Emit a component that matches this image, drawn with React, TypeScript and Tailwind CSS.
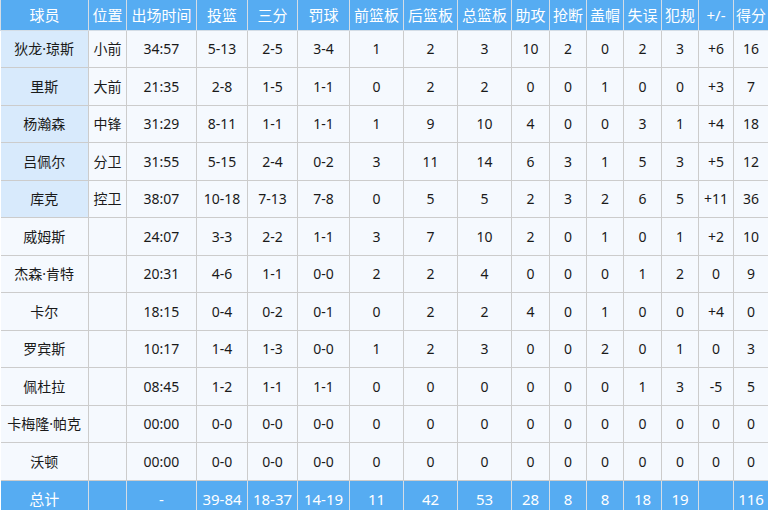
import React from "react";

type Row = {
  name: string;
  pos: string;
  starter: boolean;
  stats: string[];
};

const headers = [
  "球员", "位置", "出场时间", "投篮", "三分", "罚球", "前篮板", "后篮板",
  "总篮板", "助攻", "抢断", "盖帽", "失误", "犯规", "+/-", "得分",
];

const widths = [88, 38, 70, 51, 50, 52, 54, 54, 54, 38, 37, 37, 38, 37, 35, 35];

const rows: Row[] = [
  { name: "狄龙·琼斯", pos: "小前", starter: true, stats: ["34:57", "5-13", "2-5", "3-4", "1", "2", "3", "10", "2", "0", "2", "3", "+6", "16"] },
  { name: "里斯", pos: "大前", starter: true, stats: ["21:35", "2-8", "1-5", "1-1", "0", "2", "2", "0", "0", "1", "0", "0", "+3", "7"] },
  { name: "杨瀚森", pos: "中锋", starter: true, stats: ["31:29", "8-11", "1-1", "1-1", "1", "9", "10", "4", "0", "0", "3", "1", "+4", "18"] },
  { name: "吕佩尔", pos: "分卫", starter: true, stats: ["31:55", "5-15", "2-4", "0-2", "3", "11", "14", "6", "3", "1", "5", "3", "+5", "12"] },
  { name: "库克", pos: "控卫", starter: true, stats: ["38:07", "10-18", "7-13", "7-8", "0", "5", "5", "2", "3", "2", "6", "5", "+11", "36"] },
  { name: "威姆斯", pos: "", starter: false, stats: ["24:07", "3-3", "2-2", "1-1", "3", "7", "10", "2", "0", "1", "0", "1", "+2", "10"] },
  { name: "杰森·肯特", pos: "", starter: false, stats: ["20:31", "4-6", "1-1", "0-0", "2", "2", "4", "0", "0", "0", "1", "2", "0", "9"] },
  { name: "卡尔", pos: "", starter: false, stats: ["18:15", "0-4", "0-2", "0-1", "0", "2", "2", "4", "0", "1", "0", "0", "+4", "0"] },
  { name: "罗宾斯", pos: "", starter: false, stats: ["10:17", "1-4", "1-3", "0-0", "1", "2", "3", "0", "0", "2", "0", "1", "0", "3"] },
  { name: "佩杜拉", pos: "", starter: false, stats: ["08:45", "1-2", "1-1", "1-1", "0", "0", "0", "0", "0", "0", "1", "3", "-5", "5"] },
  { name: "卡梅隆·帕克", pos: "", starter: false, stats: ["00:00", "0-0", "0-0", "0-0", "0", "0", "0", "0", "0", "0", "0", "0", "0", "0"] },
  { name: "沃顿", pos: "", starter: false, stats: ["00:00", "0-0", "0-0", "0-0", "0", "0", "0", "0", "0", "0", "0", "0", "0", "0"] },
];

const totals = ["总计", "", "-", "39-84", "18-37", "14-19", "11", "42", "53", "28", "8", "8", "18", "19", "", "116"];

export default function App() {
  return (
    <div
      className="w-[768px] h-[510px] overflow-hidden bg-white text-[14px] text-[#1a1a1a]"
      style={{ fontFamily: '"Noto Sans", "Noto Sans CJK SC", sans-serif' }}
    >
      <table className="w-[768px] table-fixed border-collapse text-center">
        <colgroup>
          {widths.map((w, i) => (
            <col key={i} style={{ width: w }} />
          ))}
        </colgroup>
        <thead>
          <tr className="h-[30px] bg-[#56acf2] text-white text-[15px]">
            {headers.map((h) => (
              <th key={h} className="border border-[#d4dde6] border-t-0 font-normal p-0 whitespace-nowrap">
                {h}
              </th>
            ))}
          </tr>
        </thead>
        <tbody>
          {rows.map((r) => (
            <tr key={r.name} className="h-[37.5px] bg-[#f5f9fe]">
              <td className={`border border-[#cccccc] border-l-0 p-0 whitespace-nowrap ${r.starter ? "bg-[#d8eafc]" : ""}`}>
                {r.name}
              </td>
              <td className="border border-[#cccccc] p-0">{r.pos}</td>
              {r.stats.map((s, i) => (
                <td key={i} className="border border-[#cccccc] p-0 whitespace-nowrap">
                  {s}
                </td>
              ))}
            </tr>
          ))}
          <tr className="h-[37.5px] bg-[#56acf2] text-white text-[15px]">
            {totals.map((t, i) => (
              <td key={i} className={`border border-[#d4dde6] p-0 whitespace-nowrap ${i === 0 ? "border-l-0" : ""}`}>
                {t}
              </td>
            ))}
          </tr>
        </tbody>
      </table>
    </div>
  );
}
